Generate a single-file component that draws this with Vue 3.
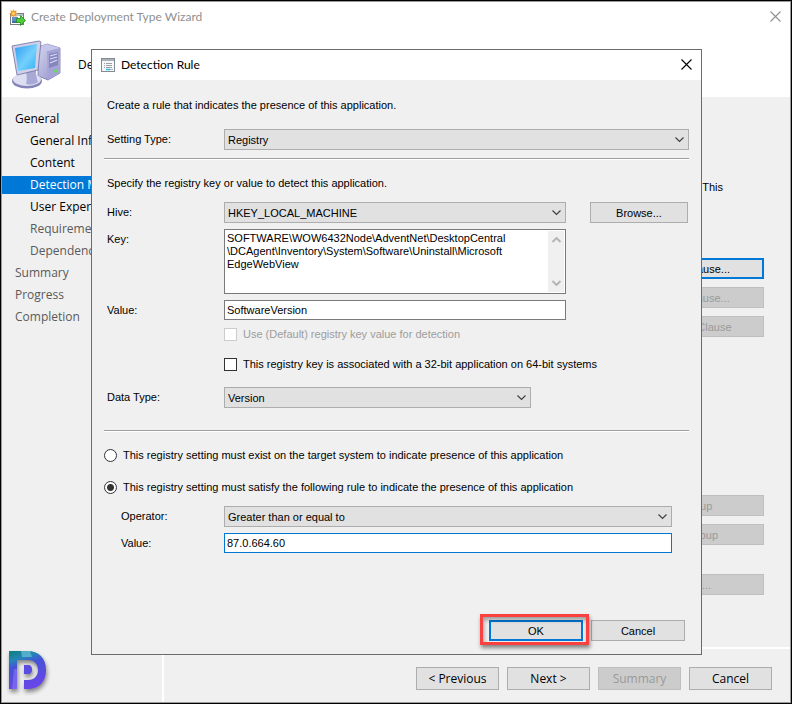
<script setup>
import { ref } from 'vue'

const steps = [
  { label: 'General' },
  { label: 'General Info', sub: true },
  { label: 'Content', sub: true },
  { label: 'Detection M', sub: true, active: true },
  { label: 'User Experie', sub: true },
  { label: 'Requiremen', sub: true, pending: true },
  { label: 'Dependenci', sub: true, pending: true },
  { label: 'Summary', pending: true },
  { label: 'Progress', pending: true },
  { label: 'Completion', pending: true },
]

const settingType = ref('Registry')
const hive = ref('HKEY_LOCAL_MACHINE')
const keyPath = ref('SOFTWARE\\WOW6432Node\\AdventNet\\DesktopCentral\n\\DCAgent\\Inventory\\System\\Software\\Uninstall\\Microsoft\nEdgeWebView')
const valueName = ref('SoftwareVersion')
const useDefault = ref(false)
const is32bit = ref(false)
const dataType = ref('Version')
const mode = ref('rule')   // exist | rule
const operator = ref('Greater than or equal to')
const ruleValue = ref('87.0.664.60')
</script>

<template>
  <div class="window">
    <header class="titlebar">
      <svg class="app-icon" width="17" height="17" viewBox="0 0 17 17">
        <rect x="1.5" y="4.5" width="13" height="11" fill="#fbfcfd" stroke="#777b82" />
        <path d="M7 5h7v2H7z" fill="#b9c3d0" />
        <path d="M3 8h6v6H3z" fill="#5f8fc4" />
        <path d="M3 12h6v2H3z" fill="#476f9e" />
        <path d="M7.500 9.500h4V6.500l5 5-5 5v-3h-4z" fill="#4fcb3c" stroke="#1f8a1a" stroke-width=".8" />
        <path d="M4.500 0l.8 2L7.500 1.200 7 3.400 9 4.500 7 5.500 7.500 8 5.300 7 4.500 9 3.600 7 1.500 8 2 5.500 0 4.500 2 3.400 1.300 1.200 3.600 2z" fill="#f39b2c" />
        <circle cx="4.500" cy="4.500" r="1.500" fill="#fcd46a" />
      </svg>
      <h1>Create Deployment Type Wizard</h1>
      <button class="close close--dim" aria-label="Close">
        <svg width="11" height="11" viewBox="0 0 11 11"><path d="M.5.5l10 10M10.500.5l-10 10" /></svg>
      </button>
    </header>

    <div class="banner">
      <svg width="50" height="50" viewBox="0 0 50 50">
        <defs>
          <linearGradient id="screen" x1="0" y1="0" x2="1" y2="1">
            <stop offset="0" stop-color="#2f9df2" />
            <stop offset=".55" stop-color="#74d0fc" />
            <stop offset="1" stop-color="#2fb0f2" />
          </linearGradient>
          <linearGradient id="metal" x1="0" y1="0" x2="1" y2="1">
            <stop offset="0" stop-color="#d6d6f0" />
            <stop offset="1" stop-color="#8e8ec6" />
          </linearGradient>
        </defs>
        <path d="M27 7l9-3 13 4v25l-12 7-10-4z" fill="url(#metal)" stroke="#7575ad" stroke-width=".8" />
        <path d="M36 11l13-3v25l-12 7z" fill="#a3a3d6" />
        <path d="M27 7l9-3 13 4-13 3z" fill="#c6c6ea" />
        <path d="M38 14l9-2v13l-9 3z" fill="#8585c0" />
        <path d="M39 16l7-2M39 19l7-2M39 23l7-3" stroke="#dcdcf6" stroke-width="1.200" />
        <circle cx="45" cy="31" r="1.800" fill="#66df4a" />
        <ellipse cx="16" cy="41" rx="15" ry="7.500" fill="#8585b8" />
        <ellipse cx="16" cy="39.500" rx="14" ry="6.500" fill="#dedef3" />
        <path d="M15 32l10-2c0 6 1 9 2 12-4 3-9 3-12 2 1-4 1-8 0-12z" fill="#a9a9d8" />
        <path d="M1 6L28 1l2 1-3 28L6 35z" fill="#cfcfe8" stroke="#7b7baa" stroke-width=".9" />
        <path d="M4 8l22-4-2 24L7 31z" fill="url(#screen)" />
      </svg>
      <span>De</span>
    </div>

    <div class="main">
      <aside class="sidebar">
        <ul>
          <li
            v-for="s in steps"
            :key="s.label"
            :class="{ sub: s.sub, active: s.active, pending: s.pending }"
          >{{ s.label }}</li>
        </ul>
        <svg class="logo" width="42" height="44" viewBox="0 0 42 44">
          <defs>
            <linearGradient id="mark" x1=".2" y1="0" x2=".5" y2="1">
              <stop offset="0" stop-color="#11808a" />
              <stop offset=".2" stop-color="#2585b8" />
              <stop offset=".38" stop-color="#4652d6" />
              <stop offset="1" stop-color="#6a45ea" />
            </linearGradient>
          </defs>
          <path fill="url(#mark)" fill-rule="evenodd" d="M1 1h18c12 0 19 7 19 19s-7 19-19 19h-3v-9h4c6 0 10-4 10-10s-4-10-10-10H9v29H1z" />
          <path fill="#5a4be2" d="M16 15h4c3 0 4 2 4 4.500S23 24 20 24h-4z" />
          <path d="M13 1h9l2 6H14z" fill="#7fd0e6" opacity=".55" />
          <path d="M4 39l2-20h3v20z" fill="#8f7bf2" opacity=".55" />
        </svg>
      </aside>

      <section class="content">
        <p class="intro">This</p>
        <div class="actions">
          <button class="btn btn--focus">Add Clause...</button>
          <button class="btn" disabled>Edit Clause...</button>
          <button class="btn" disabled>Delete Clause</button>
        </div>
        <div class="actions actions--group">
          <button class="btn" disabled>Group</button>
          <button class="btn" disabled>Ungroup</button>
        </div>
        <div class="actions actions--edit">
          <button class="btn" disabled>Edit...</button>
        </div>
        <footer class="nav">
          <button class="btn">&lt; Previous</button>
          <button class="btn">Next &gt;</button>
          <button class="btn" disabled>Summary</button>
          <button class="btn">Cancel</button>
        </footer>
      </section>
    </div>

    <div class="dialog" role="dialog" aria-labelledby="dlg-title">
      <header class="dlg-title">
        <svg width="14" height="14" viewBox="0 0 14 14">
          <rect x=".5" y=".5" width="13" height="13" fill="#f7f8f9" stroke="#858b92" />
          <path d="M1 1h12v2H1z" fill="#a9b0b8" />
          <path d="M3 5.500h1M5 5.500h6M3 7.500h1M5 7.500h6M3 9.500h1M5 9.500h6" stroke="#9aa1a9" />
          <path d="M5 11.500h4" stroke="#25c6ea" stroke-width="1.500" />
          <path d="M9 11.500h3" stroke="#b0b6bc" />
        </svg>
        <h2 id="dlg-title">Detection Rule</h2>
        <button class="close" aria-label="Close">
          <svg width="11" height="11" viewBox="0 0 11 11"><path d="M.5.5l10 10M10.500.5l-10 10" /></svg>
        </button>
      </header>

      <form class="dlg-body" @submit.prevent>
        <p class="hint">Create a rule that indicates the presence of this application.</p>
        <div class="row row--type">
          <label for="setting-type">Setting Type:</label>
          <div class="combo">
            <select id="setting-type" v-model="settingType"><option>Registry</option></select>
            <svg width="9" height="6" viewBox="0 0 9 6"><path d="M.5.5l4 4 4-4" /></svg>
          </div>
        </div>

        <hr class="rule-top">
        <p class="hint hint--key">Specify the registry key or value to detect this application.</p>

        <div class="fields">
          <label for="hive">Hive:</label>
          <div class="combo">
            <select id="hive" v-model="hive"><option>HKEY_LOCAL_MACHINE</option></select>
            <svg width="9" height="6" viewBox="0 0 9 6"><path d="M.5.5l4 4 4-4" /></svg>
          </div>
          <button class="btn" type="button">Browse...</button>

          <label for="key">Key:</label>
          <div class="memo">
            <textarea id="key" v-model="keyPath" spellcheck="false"></textarea>
            <div class="scroll">
              <svg width="9" height="6" viewBox="0 0 9 6"><path d="M.5 5l4-4 4 4" /></svg>
              <svg width="9" height="6" viewBox="0 0 9 6"><path d="M.5 1l4 4 4-4" /></svg>
            </div>
          </div>

          <label class="first" for="value-name">Value:</label>
          <input id="value-name" v-model="valueName" class="text" type="text" spellcheck="false">
        </div>

        <div class="checks">
          <label class="check check--off"><input v-model="useDefault" type="checkbox" disabled>Use (Default) registry key value for detection</label>
          <label class="check"><input v-model="is32bit" type="checkbox">This registry key is associated with a 32-bit application on 64-bit systems</label>
        </div>

        <div class="row row--data">
          <label for="data-type">Data Type:</label>
          <div class="combo">
            <select id="data-type" v-model="dataType"><option>Version</option></select>
            <svg width="9" height="6" viewBox="0 0 9 6"><path d="M.5.5l4 4 4-4" /></svg>
          </div>
        </div>

        <hr class="rule-bottom">

        <div class="modes">
          <label class="check"><input v-model="mode" type="radio" name="mode" value="exist">This registry setting must exist on the target system to indicate presence of this application</label>
          <label class="check"><input v-model="mode" type="radio" name="mode" value="rule">This registry setting must satisfy the following rule to indicate the presence of this application</label>
        </div>

        <div class="compare">
          <label for="operator">Operator:</label>
          <div class="combo">
            <select id="operator" v-model="operator"><option>Greater than or equal to</option></select>
            <svg width="9" height="6" viewBox="0 0 9 6"><path d="M.5.5l4 4 4-4" /></svg>
          </div>
          <label for="rule-value">Value:</label>
          <input id="rule-value" v-model="ruleValue" class="text text--focus" type="text">
        </div>

        <div class="dlg-actions">
          <div class="marked"><button class="btn btn--focus" type="submit">OK</button></div>
          <button class="btn" type="button">Cancel</button>
        </div>
      </form>
    </div>
  </div>
</template>

<style>
body { margin: 0; background: #f0f0f0; }
</style>

<style scoped>
.window {
  position: relative; display: flex; flex-direction: column;
  min-height: 100vh; box-sizing: border-box;
  border: 1px solid #000; outline: 1px solid #9a9a9a; outline-offset: -2px;
  padding: 1px; background: #f0f0f0; color: #000;
  font: 12px/18px "Open Sans", "Noto Sans", sans-serif;
}
h1, h2, p, ul { margin: 0; padding: 0; font-size: inherit; font-weight: normal; }
button, input, select, textarea { font: inherit; color: inherit; box-sizing: border-box; margin: 0; }

.titlebar {
  display: flex; align-items: center; gap: 5px; height: 30px; padding: 0 9px 0 7px;
  background: #fff; color: #8f8f8f; font: 12px/18px Lato, "Open Sans", sans-serif;
}
.close {
  display: flex; align-items: center; justify-content: center;
  margin: 0 0 2px auto; padding: 0; width: 11px; height: 20px; border: 0; background: none;
}
.close path { fill: none; stroke: #000; stroke-width: 1.1; }
.close--dim path { stroke: #8f8f8f; }

.banner { display: flex; align-items: center; gap: 17px; height: 65px; padding: 0 9px; background: #fff; }

.main { display: flex; flex: 1; }
.sidebar {
  display: flex; flex-direction: column; flex: 0 0 162px; box-sizing: border-box;
  border-right: 2px solid #fff; padding-top: 13px;
}
.sidebar ul { display: flex; flex-direction: column; gap: 4px; list-style: none; }
.sidebar li { padding-left: 13px; white-space: nowrap; }
.sidebar li.sub { padding-left: 28px; }
.sidebar li.active { background: #0078d7; color: #fff; }
.sidebar li.pending { color: #5a5a5a; }
.logo { margin: auto 0 8px 6px; filter: drop-shadow(1px 3px 2px rgba(0,0,0,0.45)); }

.content { display: flex; flex-direction: column; flex: 1; font: 11px/16px "Liberation Sans", Arial, sans-serif; }
.intro { margin-top: 82px; padding-right: 67px; text-align: right; }
.actions {
  display: flex; flex-direction: column; align-self: flex-end; gap: 8px;
  width: 134px; margin: 63px 26px 0 0;
}
.actions--group { margin-top: 158px; }
.actions--edit { margin-top: 29px; }
.nav {
  display: flex; justify-content: flex-end; gap: 8px; margin-top: auto;
  padding: 18px 18px 12px; border-top: 2px solid #fff;
  font: 12px/18px "Open Sans", "Noto Sans", sans-serif;
}
.nav .btn { width: 83px; height: 23px; }

.btn { height: 21px; padding: 0; border: 1px solid #adadad; background: #e1e1e1; text-align: center; white-space: nowrap; }
.btn:disabled { background: #ccc; border-color: #bfbfbf; color: #9a9a9a; }
.btn--focus { border: 2px solid #0078d7; }

.dialog {
  position: absolute; top: 48px; left: 90px; right: 89px;
  border: 1px solid #6b6b6b; background: #f0f0f0;
  font: 11px/16px "Liberation Sans", Arial, sans-serif;
}
.dlg-title {
  display: flex; align-items: center; gap: 6px; height: 30px; padding: 0 9px;
  background: #fff; font: 12px/18px Lato, "Open Sans", sans-serif;
}
.dlg-body { padding: 17px 12px 13px; }
.hint { padding-left: 3px; }
.hint--key { margin-top: 15px; }
hr { height: 1px; margin: 0; border: 0; border-top: 1px solid #a0a0a0; background: #fff; }
.rule-top { margin-top: 8px; }
.rule-bottom { margin-top: 22px; }

.row, .fields, .compare { display: grid; grid-template-columns: 120px 1fr; align-items: start; row-gap: 6px; line-height: 20px; }
.row label, .fields label { padding-left: 3px; }
.row--type { margin-top: 16px; }
.row--data { grid-template-columns: 120px 307px; margin-top: 15px; }
.fields { grid-template-columns: 120px 1fr 98px; margin: 11px 1px 0 0; }
.fields .combo, .fields .memo, .fields .text { margin-right: 24px; }
.first { grid-column: 1; }

.combo { display: grid; align-items: center; }
.combo select {
  grid-area: 1 / 1; appearance: none; width: 100%; height: 21px;
  border: 1px solid #adadad; border-radius: 0; background: #e1e1e1; padding: 0 20px 0 3px;
}
.combo svg { grid-area: 1 / 1; justify-self: end; margin-right: 5px; pointer-events: none; }
.combo path { fill: none; stroke: #404040; stroke-width: 1.2; }

.memo { display: flex; height: 65px; box-sizing: border-box; border: 1px solid #7a7a7a; background: #fff; padding: 1px; }
.memo textarea {
  flex: 1; min-width: 0; resize: none; border: 0; outline: 0; background: none;
  padding: 1px; line-height: 13px; white-space: pre; overflow: hidden;
}
.scroll {
  display: flex; flex-direction: column; align-items: center; justify-content: space-between;
  width: 16px; box-sizing: border-box; padding: 6px 0; background: #f0f0f0;
}
.scroll path { fill: none; stroke: #b5b5b5; stroke-width: 2; }

.text { min-width: 0; height: 20px; border: 1px solid #7a7a7a; border-radius: 0; padding: 0 2px; background: #fff; outline: 0; }
.text--focus { border-color: #0078d7; }

.checks { display: flex; flex-direction: column; gap: 14px; margin-top: 6px; padding-left: 120px; }
.modes { display: flex; flex-direction: column; gap: 16px; margin-top: 15px; }
.check { display: flex; align-items: center; gap: 6px; white-space: nowrap; }
.check--off { color: #9d9d9d; }
.check input { appearance: none; flex: none; width: 13px; height: 13px; border: 1px solid #333; background: #fff; }
.check input:disabled { border-color: #ccc; }
.check input[type="checkbox"]:checked { background: #333; }
.check input[type="radio"] { border-radius: 50%; }
.check input[type="radio"]:checked { background: radial-gradient(#333 0 3px, #fff 4px); }

.compare { margin: 11px 17px 0 0; }
.compare label { padding-left: 17px; }

.dlg-actions { display: flex; justify-content: flex-end; gap: 8px; margin-top: 67px; padding-right: 4px; }
.dlg-actions .btn { width: 94px; }
.marked { position: relative; display: flex; }
.marked::after {
  content: ''; position: absolute; inset: -6px -6px -4px -9px; pointer-events: none;
  border: 3px solid #f9423f; box-shadow: 1px 3px 4px rgba(0,0,0,0.45), inset 1px 3px 4px rgba(0,0,0,0.35);
}
</style>
